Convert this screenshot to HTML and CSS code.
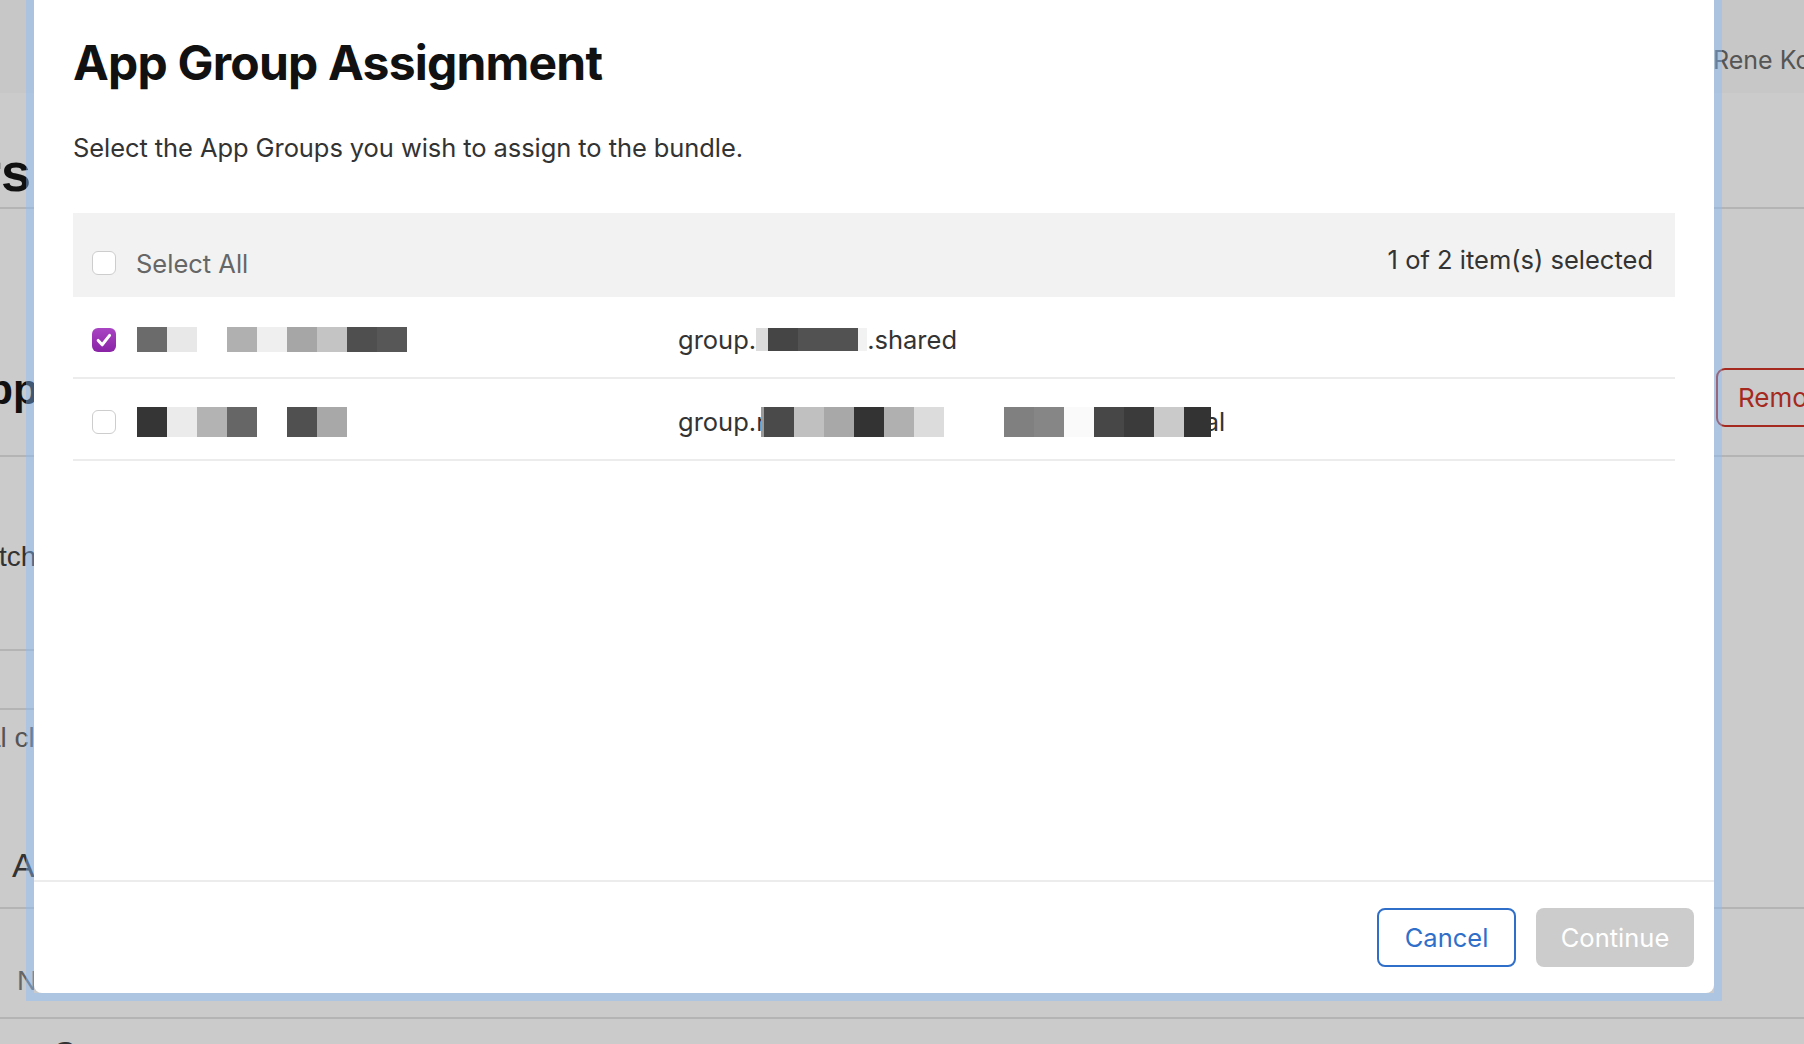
FILE: index.html
```html
<!DOCTYPE html>
<html lang="en">
<head>
<meta charset="utf-8">
<title>App Group Assignment</title>
<link rel="stylesheet" href="styles.css">
</head>
<body>
<div class="page">
  <div class="prow topbar">
    <div class="lcell"></div>
    <div class="mid"></div>
    <div class="rcell"><div class="user">Rene Koch</div></div>
  </div>
  <div class="prow r1">
    <div class="lcell"><div class="frag frag-s"><span>Identifiers</span></div></div>
    <div class="mid"></div>
    <div class="rcell"></div>
  </div>
  <div class="prow r2">
    <div class="lcell"><div class="frag frag-app"><span>App Groups</span></div></div>
    <div class="mid"></div>
    <div class="rcell"><div class="remove">Remove</div></div>
  </div>
  <div class="prow r3">
    <div class="lcell">
      <div class="frag frag-tch"><span>Watch App</span></div>
      <div class="lrule rule1"></div>
      <div class="lrule rule2"></div>
      <div class="frag frag-cl"><span>al classes</span></div>
      <div class="frag frag-a"><span>App</span></div>
    </div>
    <div class="mid"></div>
    <div class="rcell"></div>
  </div>
  <div class="prow r4">
    <div class="lcell"><div class="frag frag-n"><span>Name</span></div></div>
    <div class="mid"></div>
    <div class="rcell"></div>
  </div>
  <div class="prow r5">
    <div class="lcell"></div>
    <div class="mid"><div class="frag frag-c"><span>C</span></div></div>
    <div class="rcell"></div>
  </div>
</div>

<div class="frame">
  <div class="dialog">
    <div class="dlg-body">
      <h2 class="title">App Group Assignment</h2>
      <p class="subtitle">Select the App Groups you wish to assign to the bundle.</p>
      <div class="list">
        <div class="list-head">
          <div class="head-left">
            <span class="cb"></span>
            <span class="select-all">Select All</span>
          </div>
          <div class="count">1 of 2 item(s) selected</div>
        </div>
        <div class="row">
          <span class="cb cb-on">
            <svg viewBox="0 0 24 24" width="24" height="24"><path d="M6.2 12.4 L10.2 16.8 L17.6 7.4" fill="none" stroke="#fff" stroke-width="3" stroke-linecap="round" stroke-linejoin="round"/></svg>
          </span>
          <div class="name">
            <span class="px k6b"></span><span class="px ke8"></span><span class="px gap"></span><span class="px kb0"></span><span class="px kef"></span><span class="px ka6"></span><span class="px kc4"></span><span class="px k4f"></span><span class="px k57"></span>
          </div>
          <div class="group">
            <span class="gtxt">group.</span><span class="px sm w12 kdc"></span><span class="px sm k45"></span><span class="px sm w60 k52"></span><span class="px sm w9 kf2"></span><span class="gtxt">.shared</span>
          </div>
        </div>
        <div class="row">
          <span class="cb"></span>
          <div class="name">
            <span class="px tall k35"></span><span class="px tall keb"></span><span class="px tall kb3"></span><span class="px tall k66"></span><span class="px tall gap"></span><span class="px tall k50"></span><span class="px tall ka8"></span>
          </div>
          <div class="group">
            <span class="gtxt">group.r</span><span class="px tall w3 k9a lap"></span><span class="px tall k4a"></span><span class="px tall kc0"></span><span class="px tall ka8"></span><span class="px tall k33"></span><span class="px tall kb0"></span><span class="px tall kdc"></span><span class="px tall w60 gap"></span><span class="px tall k80"></span><span class="px tall k86"></span><span class="px tall kfa"></span><span class="px tall k47"></span><span class="px tall k3b"></span><span class="px tall kca"></span><span class="px tall w27 k33"></span><span class="gtxt tail">al</span>
          </div>
        </div>
      </div>
    </div>
    <div class="dlg-foot">
      <button class="btn btn-cancel" type="button">Cancel</button>
      <button class="btn btn-continue" type="button" disabled>Continue</button>
    </div>
  </div>
</div>
</body>
</html>
```
FILE: styles.css
```css
html, body {
  margin: 0;
  padding: 0;
}
body {
  width: 1804px;
  height: 1044px;
  overflow: hidden;
  position: relative;
  background: #cbcbcb;
  font-family: Inter, "Noto Sans", "Liberation Sans", sans-serif;
  color: #333;
}

/* ---------- background page (seen through overlay) ---------- */
.page {
  display: flex;
  flex-direction: column;
  width: 1804px;
}
.prow {
  display: flex;
  box-sizing: border-box;
  border-bottom: 2px solid #b4b4b4;
}
.topbar {
  height: 93px;
  background: #c7c7c7;
  border-bottom: none;
}
.r1 { height: 116px; }
.r2 { height: 248px; }
.r3 { height: 452px; }
.r4 { height: 110px; }
.r5 { height: 30px; border-bottom: none; }
.lcell {
  width: 34px;
  overflow: hidden;
  display: flex;
  flex-direction: column;
  flex: none;
}
.mid { flex: 1; overflow: hidden; }
.rcell {
  width: 91px;
  flex: none;
  overflow: hidden;
  display: flex;
  flex-direction: column;
}
.user {
  margin-top: 48px;
  font-size: 25px;
  line-height: 25px;
  color: #555;
  white-space: nowrap;
}
.remove {
  margin-top: 159px;
  margin-left: 3px;
  height: 59px;
  width: 140px;
  box-sizing: border-box;
  border: 2px solid #a5291f;
  border-radius: 9px;
  color: #a5291f;
  font-size: 26px;
  line-height: 55px;
  padding-left: 20px;
  white-space: nowrap;
}
.frag {
  display: flex;
  white-space: nowrap;
}
.frag span { flex: none; }
.frag-s {
  justify-content: flex-end;
  padding-right: 3px;
  margin-top: 52px;
  font: 700 54px/54px "Liberation Sans", Arial, sans-serif;
  color: #111;
}
.frag-app {
  margin-top: 160px;
  font: 700 42px/42px "Liberation Sans", Arial, sans-serif;
  color: #111;
}
.frag-app span { margin-left: -43px; }
.frag-tch {
  margin-top: 86px;
  font: 400 28px/28px "Liberation Sans", Arial, sans-serif;
  color: #333;
}
.frag-tch span { margin-left: -42px; }
.lrule {
  height: 2px;
  background: #b4b4b4;
  flex: none;
}
.rule1 { margin-top: 78px; }
.rule2 { margin-top: 57px; }
.frag-cl {
  margin-top: 14px;
  font: 400 28px/28px "Liberation Sans", Arial, sans-serif;
  color: #555;
}
.frag-cl span { margin-left: -15px; }
.frag-a {
  margin-top: 96px;
  padding-left: 12px;
  font: 400 34px/34px "Liberation Sans", Arial, sans-serif;
  color: #333;
}
.frag-n {
  margin-top: 58px;
  padding-left: 17px;
  font: 400 28px/28px "Liberation Sans", Arial, sans-serif;
  color: #666;
}
.frag-c {
  margin-top: 17px;
  padding-left: 18px;
  font: 400 34px/34px "Liberation Sans", Arial, sans-serif;
  color: #333;
}

/* ---------- dialog ---------- */
.frame {
  position: absolute;
  left: 26px;
  top: -8px;
  border: 8px solid rgba(130, 189, 255, 0.41);
}
.dialog {
  width: 1680px;
  height: 993px;
  background: #fff;
  border-radius: 0 0 8px 8px;
  display: flex;
  flex-direction: column;
}
.dlg-body {
  flex: 1;
  padding: 34px 39px 0 39px;
}
.title {
  margin: 0;
  font-weight: 700;
  font-size: 48px;
  line-height: 57.6px;
  color: #111;
  letter-spacing: -0.8px;
}
.subtitle {
  margin: 39px 0 0;
  font-size: 25.5px;
  line-height: 33px;
  color: #333;
  letter-spacing: -0.08px;
}
.list { margin-top: 49px; }
.list-head {
  height: 84px;
  box-sizing: border-box;
  background: #f2f2f2;
  display: flex;
  justify-content: space-between;
  align-items: flex-start;
  padding: 30px 22px 0 19px;
}
.head-left {
  display: flex;
  align-items: center;
  gap: 20px;
  margin-top: 4px;
}
.select-all {
  font-size: 25.5px;
  line-height: 33px;
  color: #666;
}
.count {
  font-size: 25.5px;
  line-height: 33px;
  color: #333;
}
.cb {
  width: 24px;
  height: 24px;
  box-sizing: border-box;
  border: 1.5px solid #cdcdcd;
  border-radius: 6px;
  background: #fff;
  flex: none;
  display: block;
}
.cb-on {
  border: none;
  background: linear-gradient(#a944c3, #8a23a6);
}
.cb-on svg { display: block; }
.row {
  height: 82px;
  box-sizing: border-box;
  border-bottom: 2px solid #ececec;
  padding: 6px 0 0 19px;
  display: flex;
  align-items: center;
}
.name {
  margin-left: 21px;
  width: 541px;
  flex: none;
  display: flex;
  align-items: center;
}
.group {
  display: flex;
  align-items: center;
  font-size: 25.5px;
  line-height: 33px;
  color: #333;
  white-space: nowrap;
}
.gtxt.tail { margin-left: -6px; }
.px {
  display: block;
  width: 30px;
  height: 25px;
  flex: none;
}
.px.sm { height: 23px; }
.px.tall { height: 30px; }
.px.gap { background: transparent; }
.w3 { width: 3px !important; }
.w9 { width: 9px !important; }
.w12 { width: 12px !important; }
.w27 { width: 27px !important; }
.w60 { width: 60px !important; }
.lap { margin-left: -5px; }
.k33 { background: #333333; }
.k35 { background: #353535; }
.k3b { background: #3b3b3b; }
.k45 { background: #454545; }
.k47 { background: #474747; }
.k4a { background: #4a4a4a; }
.k4f { background: #4f4f4f; }
.k50 { background: #505050; }
.k52 { background: #525252; }
.k57 { background: #575757; }
.k66 { background: #666666; }
.k6b { background: #6b6b6b; }
.k80 { background: #808080; }
.k86 { background: #868686; }
.k9a { background: #9a9a9a; }
.ka6 { background: #a6a6a6; }
.ka8 { background: #a8a8a8; }
.kb0 { background: #b0b0b0; }
.kb3 { background: #b3b3b3; }
.kc0 { background: #c0c0c0; }
.kc4 { background: #c4c4c4; }
.kca { background: #cacaca; }
.kdc { background: #dcdcdc; }
.ke8 { background: #e8e8e8; }
.keb { background: #ebebeb; }
.kef { background: #efefef; }
.kf2 { background: #f2f2f2; }
.kfa { background: #fafafa; }

.dlg-foot {
  border-top: 2px solid #ececec;
  padding: 26px 20px 26px;
  display: flex;
  justify-content: flex-end;
  gap: 20px;
}
.btn {
  height: 59px;
  box-sizing: border-box;
  border-radius: 8px;
  font-family: Inter, "Noto Sans", sans-serif;
  font-size: 25.5px;
  display: flex;
  align-items: center;
  justify-content: center;
  padding: 0;
  margin: 0;
}
.btn-cancel {
  width: 139px;
  border: 2px solid #2f6fca;
  background: #fff;
  color: #2f6fca;
}
.btn-continue {
  width: 158px;
  border: none;
  background: #cccccc;
  color: #fff;
}
```
